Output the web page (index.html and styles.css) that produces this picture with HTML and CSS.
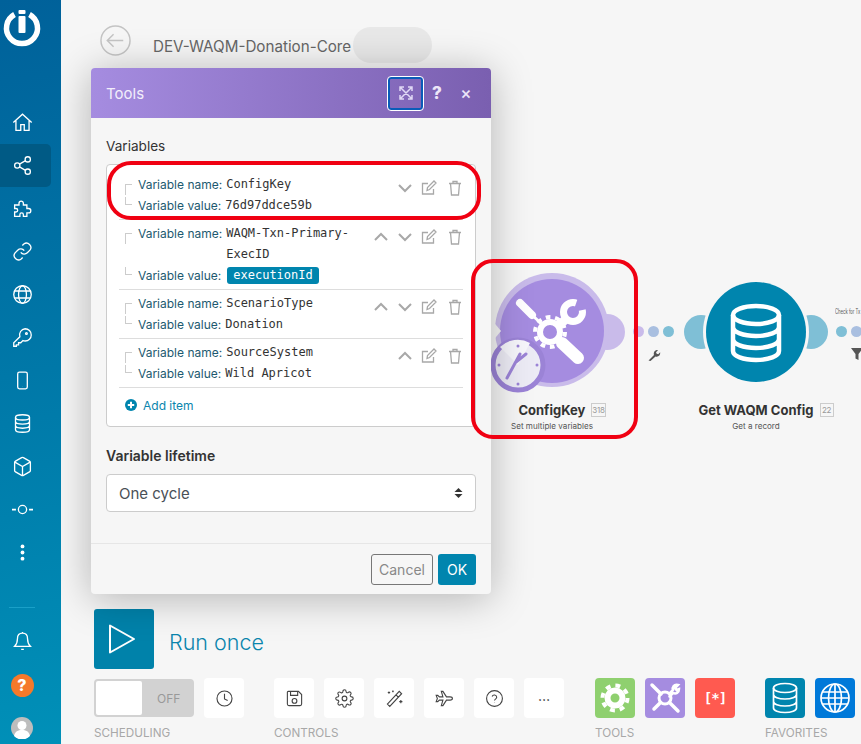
FILE: index.html
```html
<!DOCTYPE html>
<html lang="en">
<head>
  <meta charset="UTF-8" />
  <title>DEV-WAQM-Donation-Core</title>
  <link rel="stylesheet" href="styles.css">
</head>
<body>
<div class="app">

  <!-- Left nav -->
  <nav class="sidebar">
    <svg class="logo" width="40" height="40" viewBox="0 0 40 40">
      <path d="M12.5 6.5a15.5 15.5 0 1 0 15 0" fill="none" stroke="#fff" stroke-width="5.5"/>
      <rect x="16.5" y="2" width="7" height="4" rx="1" fill="#fff"/>
      <rect x="16.5" y="8" width="7" height="17" rx="1" fill="#fff"/>
    </svg>
    <ul class="nav-list">
      <li class="nav-item"><svg viewBox="0 0 24 24"><path d="M1.5 12 12 2.5 22.5 12M4.5 10v11H10v-6.500h4V21h5.5V10"/></svg></li>
      <li class="nav-item active"><svg viewBox="0 0 24 24"><circle cx="18" cy="5" r="3"/><circle cx="6" cy="12" r="3"/><circle cx="18" cy="19" r="3"/><path d="m8.6 13.500 6.800 4M15.400 6.500l-6.800 4"/></svg></li>
      <li class="nav-item"><svg viewBox="0 0 24 24"><path d="M3 8h5V6a2.500 2.500 0 0 1 5 0v2h4v4h2a2.500 2.500 0 0 1 0 5h-2v4h-4v-2a2 2 0 0 0-4 0v2H3v-5h1.500a2 2 0 0 0 0-4H3z"/></svg></li>
      <li class="nav-item"><svg viewBox="0 0 24 24"><path d="M10 13a5 5 0 0 0 7.500.5l3-3a5 5 0 0 0-7-7l-1.700 1.700"/><path d="M14 11a5 5 0 0 0-7.500-.5l-3 3a5 5 0 0 0 7 7l1.700-1.700"/></svg></li>
      <li class="nav-item"><svg viewBox="0 0 24 24"><circle cx="12" cy="12" r="10"/><ellipse cx="12" cy="12" rx="4.5" ry="10"/><path d="M3 8h18M3 16h18"/></svg></li>
      <li class="nav-item"><svg viewBox="0 0 24 24"><path d="M15 2a7 7 0 0 1 0 14c-1 0-1.800-.2-2.500-.5L10 18H7.500v2.500H5V22H2v-4l7-6.800A7 7 0 0 1 15 2z"/><circle cx="16.5" cy="7.5" r="1"/></svg></li>
      <li class="nav-item"><svg viewBox="0 0 24 24"><rect x="6.5" y="2.5" width="11" height="19" rx="2"/><path d="M12 18.500v.1"/></svg></li>
      <li class="nav-item"><svg viewBox="0 0 24 24"><ellipse cx="12" cy="5" rx="8" ry="3"/><path d="M4 5v14c0 1.700 3.600 3 8 3s8-1.300 8-3V5M4 9.700c0 1.700 3.600 3 8 3s8-1.300 8-3M4 14.400c0 1.700 3.600 3 8 3s8-1.300 8-3"/></svg></li>
      <li class="nav-item"><svg viewBox="0 0 24 24"><path d="M21 16.500v-9a2 2 0 0 0-1-1.700l-7-4a2 2 0 0 0-2 0l-7 4a2 2 0 0 0-1 1.700v9a2 2 0 0 0 1 1.700l7 4a2 2 0 0 0 2 0l7-4a2 2 0 0 0 1-1.700z"/><path d="M3.300 7 12 12l8.700-5M12 22V12"/></svg></li>
      <li class="nav-item"><svg viewBox="0 0 24 24"><circle cx="12" cy="12" r="4.700"/><path d="M0 12h4.500M19.500 12H24" stroke-width="2"/></svg></li>
      <li class="nav-item"><svg viewBox="0 0 24 24"><circle cx="12" cy="5" r="2.200" class="solid"/><circle cx="12" cy="12" r="2.200" class="solid"/><circle cx="12" cy="19" r="2.200" class="solid"/></svg></li>
    </ul>
    <div class="nav-bottom">
      <div class="nav-divider"></div>
      <div class="nav-item"><svg viewBox="0 0 24 24"><path d="M12 2.500c-4 0-5.800 3-5.800 6.500 0 4.500-1.200 6.500-3.200 8.500h18c-2-2-3.200-4-3.200-8.500 0-3.500-1.800-6.500-5.800-6.500zM12 1v1.500M10.500 21h3"/></svg></div>
      <div class="help-badge">?</div>
      <svg class="avatar" width="22" height="22" viewBox="0 0 22 22">
        <circle cx="11" cy="11" r="11" fill="#bdbdbd"/>
        <circle cx="11" cy="8.5" r="4.500" fill="#fff"/>
        <path d="M3 19c1-4.500 4-6 8-6s7 1.500 8 6a11 11 0 0 1-16 0z" fill="#fff"/>
      </svg>
    </div>
  </nav>

  <!-- Scenario canvas -->
  <div class="canvas">
    <div class="node node-config">
      <svg class="node-art" width="160" height="130" viewBox="0 0 160 130">
        <circle cx="125" cy="60" r="18" fill="#c9bbea"/>
        <circle cx="70" cy="58" r="57" fill="#c9bbea"/>
        <circle cx="70" cy="59" r="52" fill="#a58ce0"/>
        <path d="M38 31 50 43" stroke="#fff" stroke-width="8" stroke-linecap="round"/>
        <path d="M50 43 64 56" stroke="#fff" stroke-width="3"/>
        <circle cx="91" cy="40" r="9.500" fill="none" stroke="#fff" stroke-width="7"/>
        <path d="M91 40 97 23 110 36z" fill="#a58ce0"/>
        <path d="M84 47 72 58" stroke="#fff" stroke-width="9"/>
        <path d="M80 71 96 86" stroke="#fff" stroke-width="12" stroke-linecap="round"/>
        <circle cx="68" cy="60" r="10" fill="#a58ce0" stroke="#fff" stroke-width="6"/>
        <circle cx="68" cy="60" r="15" fill="none" stroke="#fff" stroke-width="4" stroke-dasharray="4.700 4.720"/>
        <path d="M9 47l10 12-10 12z" fill="#f6f6f6"/>
        <circle cx="36" cy="93" r="25" fill="#ecebf5" stroke="#9b83d6" stroke-width="5"/>
        <path d="M36 93 18 75a25 25 0 0 1 30-4z" fill="#f6f6fb"/>
        <path d="M25 106l13-24M34 90l10-8" fill="none" stroke="#9b83d6" stroke-width="3" stroke-linecap="round"/>
        <circle cx="36" cy="74" r="1.500" fill="#9b83d6"/><circle cx="36" cy="112" r="1.500" fill="#9b83d6"/>
        <circle cx="17" cy="93" r="1.500" fill="#9b83d6"/><circle cx="55" cy="93" r="1.500" fill="#9b83d6"/>
      </svg>
      <div class="node-title"><strong>ConfigKey</strong><span class="node-count">318</span></div>
      <div class="node-sub">Set multiple variables</div>
    </div>

    <div class="link link-a">
      <i class="dot dot-p"></i><i class="dot dot-b"></i><i class="dot dot-t"></i>
      <svg class="link-icon" width="14" height="14" viewBox="0 0 14 14"><path d="M1.5 12.500 7 7c-.6-2 0-4.500 3-5l1 .2L9 4.300l.7 1.500 1.500.5 2-2c.4 3-2 5-4.700 4.200l-5 4.500z" fill="#555"/></svg>
    </div>

    <div class="node node-waqm">
      <svg class="node-art" width="160" height="130" viewBox="0 0 160 130">
        <circle cx="25" cy="60" r="17" fill="#7fbfd6"/>
        <circle cx="135" cy="60" r="17" fill="#7fbfd6"/>
        <circle cx="80" cy="60" r="53" fill="#f6f6f6"/>
        <circle cx="80" cy="60" r="50" fill="#0085ae"/>
        <g fill="none" stroke="#fff" stroke-width="4.500">
          <ellipse cx="80" cy="43" rx="23" ry="9"/>
          <path d="M57 43v36c0 5 10 9 23 9s23-4 23-9V43M57 55c0 5 10 9 23 9s23-4 23-9M57 67c0 5 10 9 23 9s23-4 23-9"/>
        </g>
      </svg>
      <div class="node-title"><strong>Get WAQM Config</strong><span class="node-count">22</span></div>
      <div class="node-sub">Get a record</div>
    </div>

    <div class="link link-b">
      <span class="filter-name">Check for Tx</span>
      <i class="dot dot-t"></i><i class="dot dot-b"></i>
      <svg class="link-icon" width="14" height="12" viewBox="0 0 14 12"><path d="M1 0h12L8.500 6v6l-3-1.500V6z" fill="#555"/></svg>
    </div>
  </div>

  <!-- Page head + toolbar -->
  <main class="main">
    <header class="scenario-head">
      <svg class="back-icon" width="31" height="31" viewBox="0 0 32 32" fill="none" stroke="#c4c4c4" stroke-width="1.500"><circle cx="16" cy="16" r="15"/><path d="M24 16H8M14 9.500 7.500 16l6.500 6.500"/></svg>
      <h1 class="scenario-name">DEV-WAQM-Donation-Core</h1>
      <span class="scenario-pill"></span>
    </header>

    <div class="run-row">
      <button class="run-btn" type="button" aria-label="Run once">
        <svg width="28" height="32" viewBox="0 0 28 32"><path d="M2 2.500v27L26 16z" fill="none" stroke="#fff" stroke-width="2" stroke-linejoin="round"/></svg>
      </button>
      <span class="run-label">Run once</span>
    </div>

    <div class="toolbar">
      <section class="tool-group">
        <div class="tool-row">
          <div class="toggle"><span class="toggle-knob"></span><span class="toggle-text">OFF</span></div>
          <button class="tool-btn" type="button"><svg viewBox="0 0 24 24"><circle cx="12" cy="12" r="9.500"/><path d="M12 6v6.500l4 2"/></svg></button>
        </div>
        <div class="tool-caption">SCHEDULING</div>
      </section>

      <section class="tool-group">
        <div class="tool-row">
          <button class="tool-btn" type="button"><svg viewBox="0 0 24 24"><path d="M4 3h13l4 4v12a2 2 0 0 1-2 2H5a2 2 0 0 1-2-2V4a1 1 0 0 1 1-1z"/><path d="M7 3v5h9V3"/><circle cx="12" cy="15" r="3"/></svg></button>
          <button class="tool-btn" type="button"><svg viewBox="0 0 24 24"><circle cx="12" cy="12" r="3"/><path d="M19.400 15a1.650 1.650 0 0 0 .33 1.820l.06.06a2 2 0 0 1 0 2.830 2 2 0 0 1-2.830 0l-.06-.06a1.650 1.650 0 0 0-1.820-.33 1.650 1.650 0 0 0-1 1.510V21a2 2 0 0 1-2 2 2 2 0 0 1-2-2v-.09A1.650 1.650 0 0 0 9 19.400a1.650 1.650 0 0 0-1.820.33l-.06.06a2 2 0 0 1-2.830 0 2 2 0 0 1 0-2.830l.06-.06a1.650 1.650 0 0 0 .33-1.820 1.650 1.650 0 0 0-1.510-1H3a2 2 0 0 1-2-2 2 2 0 0 1 2-2h.09A1.650 1.650 0 0 0 4.600 9a1.650 1.650 0 0 0-.33-1.820l-.06-.06a2 2 0 0 1 0-2.830 2 2 0 0 1 2.830 0l.06.06a1.650 1.650 0 0 0 1.820.33H9a1.650 1.650 0 0 0 1-1.510V3a2 2 0 0 1 2-2 2 2 0 0 1 2 2v.09a1.650 1.650 0 0 0 1 1.510 1.650 1.650 0 0 0 1.820-.33l.06-.06a2 2 0 0 1 2.830 0 2 2 0 0 1 0 2.830l-.06.06a1.650 1.650 0 0 0-.33 1.820V9a1.650 1.650 0 0 0 1.510 1H21a2 2 0 0 1 2 2 2 2 0 0 1-2 2h-.09a1.650 1.650 0 0 0-1.510 1z"/></svg></button>
          <button class="tool-btn" type="button"><svg viewBox="0 0 24 24"><path d="M3 19 18 3l3 3L6 22zM14 7.500l3 3M5 3v3M3.500 4.500h3M10 2v2M9 3h2M20 14v4M18 16h4"/></svg></button>
          <button class="tool-btn" type="button"><svg viewBox="0 0 24 24"><path d="M22 12c0-1.200-1.500-2-3-2h-4.500L10 3H8l2 7H5.500L3.500 8h-2L3 12l-1.500 4h2l2-2H10l-2 7h2l4.500-7H19c1.500 0 3-.8 3-2z"/></svg></button>
          <button class="tool-btn" type="button"><svg viewBox="0 0 24 24"><circle cx="12" cy="12" r="10"/><path d="M9 9.500a3 3 0 0 1 5.800 1c0 2-2.800 2.500-2.800 4M12 17.500v.1"/></svg></button>
          <button class="tool-btn tool-more" type="button">&#8230;</button>
        </div>
        <div class="tool-caption">CONTROLS</div>
      </section>

      <section class="tool-group tools-group">
        <div class="tool-row">
          <button class="tool-btn app-green" type="button"><svg viewBox="0 0 40 40"><circle cx="20" cy="20" r="7.500" stroke-width="6"/><circle cx="20" cy="20" r="12.500" stroke-width="4" stroke-dasharray="4.900 4.920"/></svg></button>
          <button class="tool-btn app-purple" type="button"><svg viewBox="0 0 40 40"><circle cx="20" cy="20" r="6" stroke-width="3"/><path d="M7 7l9 9M24.500 24.500 33 33" stroke-width="3.500"/><path d="M24.500 15.500 28 12c-1-3 1-6 5-5l-3 3 1.500 2 2.500-1c0 4-3 5-6 4l-3.500 3.500" stroke-width="2.500"/><path d="M15.500 24.500 9 31" stroke-width="3.500"/></svg></button>
          <button class="tool-btn app-red" type="button">[*]</button>
        </div>
        <div class="tool-caption">TOOLS</div>
      </section>

      <section class="tool-group">
        <div class="tool-row">
          <button class="tool-btn app-teal" type="button"><svg viewBox="0 0 40 40"><ellipse cx="20" cy="10" rx="11.500" ry="4.500"/><path d="M8.500 10v20c0 2.500 5 4.500 11.500 4.500S31.500 32.500 31.500 30V10M8.500 16.500c0 2.500 5 4.500 11.500 4.500s11.500-2 11.500-4.500M8.500 23.500c0 2.500 5 4.500 11.500 4.500s11.500-2 11.500-4.500"/></svg></button>
          <button class="tool-btn app-blue" type="button"><svg viewBox="0 0 40 40"><circle cx="20" cy="20" r="14"/><ellipse cx="20" cy="20" rx="6.500" ry="14"/><path d="M20 6v28M7 14h26M6 20h28M7 26h26"/></svg></button>
        </div>
        <div class="tool-caption">FAVORITES</div>
      </section>
    </div>
  </main>

  <!-- Tools dialog -->
  <div class="dialog">
    <div class="dialog-head">
      <span class="dialog-title">Tools</span>
      <button class="head-btn head-expand" type="button">
        <svg width="14" height="14" viewBox="0 0 14 14" fill="none" stroke="#e0d8f5" stroke-width="1.500"><path d="M1 5V1h4M9 1h4v4M13 9v4H9M5 13H1V9M1.500 1.500l11 11M12.500 1.500l-11 11"/></svg>
      </button>
      <button class="head-btn head-help" type="button">?</button>
      <button class="head-btn head-close" type="button">&#215;</button>
    </div>

    <div class="dialog-body">
      <div class="field-label">Variables</div>
      <div class="var-box">

        <div class="var-row">
          <div class="var-fields">
            <div class="var-line"><i class="corner corner-top"></i><span class="var-key">Variable name:</span><span class="var-val">ConfigKey</span></div>
            <div class="var-line"><i class="corner corner-bottom"></i><span class="var-key">Variable value:</span><span class="var-val">76d97ddce59b</span></div>
          </div>
          <div class="var-actions">
            <svg viewBox="0 0 16 16"><path d="M2 5l6 6 6-6" stroke-width="2"/></svg>
            <svg viewBox="0 0 16 16"><path d="M12.500 9v5h-11V3.500H7M6 10.500l.5-3L13 1l2 2-6.500 6.500z"/></svg>
            <svg class="var-trash" viewBox="0 0 16 16"><path d="M2 3.500h12M6 3.500v-2h4v2M3.500 3.500 4.500 15h7l1-11.500"/></svg>
          </div>
        </div>

        <div class="var-row">
          <div class="var-fields">
            <div class="var-line"><i class="corner corner-top"></i><span class="var-key">Variable name:</span><span class="var-val">WAQM-Txn-Primary-ExecID</span></div>
            <div class="var-line"><i class="corner corner-bottom"></i><span class="var-key">Variable value:</span><span class="var-pill">executionId</span></div>
          </div>
          <div class="var-actions">
            <svg viewBox="0 0 16 16"><path d="M2 11l6-6 6 6" stroke-width="2"/></svg>
            <svg viewBox="0 0 16 16"><path d="M2 5l6 6 6-6" stroke-width="2"/></svg>
            <svg viewBox="0 0 16 16"><path d="M12.500 9v5h-11V3.500H7M6 10.500l.5-3L13 1l2 2-6.500 6.500z"/></svg>
            <svg class="var-trash" viewBox="0 0 16 16"><path d="M2 3.500h12M6 3.500v-2h4v2M3.500 3.500 4.500 15h7l1-11.500"/></svg>
          </div>
        </div>

        <div class="var-row">
          <div class="var-fields">
            <div class="var-line"><i class="corner corner-top"></i><span class="var-key">Variable name:</span><span class="var-val">ScenarioType</span></div>
            <div class="var-line"><i class="corner corner-bottom"></i><span class="var-key">Variable value:</span><span class="var-val">Donation</span></div>
          </div>
          <div class="var-actions">
            <svg viewBox="0 0 16 16"><path d="M2 11l6-6 6 6" stroke-width="2"/></svg>
            <svg viewBox="0 0 16 16"><path d="M2 5l6 6 6-6" stroke-width="2"/></svg>
            <svg viewBox="0 0 16 16"><path d="M12.500 9v5h-11V3.500H7M6 10.500l.5-3L13 1l2 2-6.500 6.500z"/></svg>
            <svg class="var-trash" viewBox="0 0 16 16"><path d="M2 3.500h12M6 3.500v-2h4v2M3.500 3.500 4.500 15h7l1-11.500"/></svg>
          </div>
        </div>

        <div class="var-row">
          <div class="var-fields">
            <div class="var-line"><i class="corner corner-top"></i><span class="var-key">Variable name:</span><span class="var-val">SourceSystem</span></div>
            <div class="var-line"><i class="corner corner-bottom"></i><span class="var-key">Variable value:</span><span class="var-val">Wild Apricot</span></div>
          </div>
          <div class="var-actions">
            <svg viewBox="0 0 16 16"><path d="M2 11l6-6 6 6" stroke-width="2"/></svg>
            <svg viewBox="0 0 16 16"><path d="M12.500 9v5h-11V3.500H7M6 10.500l.5-3L13 1l2 2-6.500 6.500z"/></svg>
            <svg class="var-trash" viewBox="0 0 16 16"><path d="M2 3.500h12M6 3.500v-2h4v2M3.500 3.500 4.500 15h7l1-11.500"/></svg>
          </div>
        </div>

        <div class="add-item">
          <svg width="12" height="12" viewBox="0 0 12 12"><circle cx="6" cy="6" r="6" fill="#0085ae"/><path d="M6 2.800v6.400M2.800 6h6.400" stroke="#fff" stroke-width="2"/></svg>
          <span>Add item</span>
        </div>
      </div>

      <div class="field-label field-strong">Variable lifetime</div>
      <div class="select-box">
        <span>One cycle</span>
        <svg width="9" height="12" viewBox="0 0 9 12"><path d="M4.500 1 8.500 5h-8zM4.500 11 .5 7h8z" fill="#333"/></svg>
      </div>
    </div>

    <div class="dialog-foot">
      <button class="btn-cancel" type="button">Cancel</button>
      <button class="btn-ok" type="button">OK</button>
    </div>
  </div>

  <!-- Red annotations drawn on the screenshot -->
  <div class="mark mark-row"></div>
  <div class="mark mark-node"></div>

</div>
</body>
</html>
```

FILE: styles.css
```css
* {
  box-sizing: border-box;
}
body {
  margin: 0;
  font-family: Inter, "Liberation Sans", sans-serif;
  color: #333;
  background: #f6f6f6;
  overflow: hidden;
}
button {
  font-family: inherit;
  border: none;
  padding: 0;
  cursor: pointer;
}
.app {
  position: relative;
  display: flex;
  width: 861px;
  height: 744px;
  overflow: hidden;
}

/* sidebar */
.sidebar {
  position: relative;
  z-index: 3;
  flex: 0 0 61px;
  display: flex;
  flex-direction: column;
  background: linear-gradient(170deg, #00619a 0%, #0078a8 50%, #0090b8 100%);
}
.logo {
  margin: 8px 0 0 2px;
}
.nav-list {
  list-style: none;
  margin: 53px 0 0;
  padding: 0;
}
.nav-item {
  display: flex;
  align-items: center;
  justify-content: center;
  width: 44px;
  height: 43px;
}
.nav-item svg {
  width: 21px;
  height: 21px;
  fill: none;
  stroke: #fff;
  stroke-width: 1.5;
}
.nav-item svg .solid {
  fill: #fff;
  stroke: none;
}
.nav-item.active {
  width: 51px;
  padding-right: 7px;
  background: #005a85;
  border-radius: 0 5px 5px 0;
}
.nav-bottom {
  margin-top: auto;
  display: flex;
  flex-direction: column;
  align-items: center;
  width: 44px;
  padding-bottom: 5px;
}
.nav-divider {
  width: 26px;
  height: 1px;
  background: #1aa0c8;
  margin-bottom: 12px;
}
.help-badge {
  width: 23px;
  height: 23px;
  margin: 11px 0 20px;
  border-radius: 50%;
  background: #f5792a;
  color: #fff;
  font-size: 16px;
  font-weight: 800;
  line-height: 23px;
  text-align: center;
}

/* page head and toolbar */
.main {
  flex: 1;
  display: flex;
  flex-direction: column;
  padding: 25px 0 0 33px;
  min-width: 0;
}
.scenario-head {
  display: flex;
  align-items: center;
  height: 40px;
  padding-left: 6px;
}
.back-icon {
  margin-top: -10px;
}
.scenario-name {
  margin: 2px 2px 0 22px;
  font-size: 15.2px;
  font-weight: 400;
  color: #666;
  white-space: nowrap;
}
.scenario-pill {
  width: 79px;
  height: 36px;
  border-radius: 18px;
  background: #e8e8e8;
}
.run-row {
  display: flex;
  align-items: center;
  margin-top: auto;
}
.run-btn {
  display: flex;
  align-items: center;
  justify-content: center;
  width: 60px;
  height: 60px;
  padding-right: 4px;
  border-radius: 3px;
  background: #0082aa;
}
.run-label {
  margin: 6px 0 0 15px;
  font-size: 21.5px;
  font-weight: 300;
  color: #0a85ad;
}
.toolbar {
  display: flex;
  gap: 30px;
  margin-top: 9px;
}
.tools-group {
  margin-left: 1px;
}
.tool-row {
  display: flex;
  gap: 10px;
}
.tool-caption {
  margin-top: 8px;
  height: 18px;
  font-size: 11.7px;
  line-height: 14px;
  color: #a8a8a8;
  white-space: nowrap;
}
.tool-btn {
  display: flex;
  align-items: center;
  justify-content: center;
  width: 40px;
  height: 40px;
  border-radius: 4px;
  background: #fff;
}
.tool-btn svg {
  width: 19px;
  height: 19px;
  fill: none;
  stroke: #444;
  stroke-width: 1.4;
}
.tool-more {
  font-size: 14px;
  padding-bottom: 6px;
  color: #333;
}
.toggle {
  display: flex;
  align-items: center;
  width: 100px;
  height: 38px;
  margin-top: 1px;
  padding: 2px;
  border-radius: 4px;
  background: #d2d2d2;
}
.toggle-knob {
  width: 46px;
  height: 34px;
  border-radius: 2px;
  background: #fff;
}
.toggle-text {
  margin-left: 15px;
  font-size: 12px;
  color: #999;
}
.app-green { background: #8fd06f; }
.app-purple { background: #a58ce0; }
.app-red {
  background: #ff5a50;
  color: #fff;
  font-family: "DejaVu Sans Mono", monospace;
  font-size: 14px;
  font-weight: 700;
  letter-spacing: -1px;
}
.app-teal { background: #0085ae; }
.app-blue { background: #0079d9; }
.tool-btn.app-green svg,
.tool-btn.app-purple svg,
.tool-btn.app-teal svg,
.tool-btn.app-blue svg {
  width: 40px;
  height: 40px;
  stroke: #fff;
  stroke-width: 1.7;
}
.tool-btn.app-purple svg {
  stroke-linecap: round;
}

.canvas {
  position: absolute;
  inset: 0;
}
.node {
  position: absolute;
  top: 272px;
  width: 160px;
}
.node-config {
  left: 482px;
}
.node-waqm {
  left: 676px;
}
.node-art {
  display: block;
}
.node-title {
  display: flex;
  align-items: center;
  justify-content: center;
  gap: 6px;
  height: 18px;
  font-size: 13px;
  white-space: nowrap;
  margin-top: -1px;
}
.node-config .node-title {
  margin-left: 10px;
  width: 140px;
}
.node-waqm .node-title {
  padding-left: 20px;
}
.node-count {
  min-width: 14px;
  height: 14px;
  border: 1px solid #ccc;
  font-size: 8px;
  letter-spacing: -0.3px;
  line-height: 12px;
  text-align: center;
  color: #999;
}
.node-sub {
  margin-top: 2px;
  font-size: 8.1px;
  text-align: center;
  color: #555;
}
.node-config .node-sub {
  margin-left: -10px;
  width: 160px;
}
.link {
  position: absolute;
  top: 326px;
  display: flex;
  gap: 4px;
}
.link-a {
  left: 633px;
}
.link-b {
  left: 836px;
}
.dot {
  width: 11px;
  height: 11px;
  border-radius: 50%;
}
.dot-p { background: #c9bbea; }
.dot-b { background: #a9bfe0; }
.dot-t { background: #7fbfd6; }
.link-icon {
  position: absolute;
  top: 22px;
  left: 14px;
}
.filter-name {
  position: absolute;
  top: -19px;
  left: -1px;
  font-size: 7px;
  color: #555;
  white-space: nowrap;
  transform: scaleX(0.6);
  transform-origin: left;
}

/* dialog */
.dialog {
  position: absolute;
  z-index: 2;
  left: 91px;
  top: 68px;
  width: 400px;
  height: 526px;
  display: flex;
  flex-direction: column;
  border-radius: 4px;
  background: #f6f6f6;
  box-shadow: 0 4px 40px rgba(0, 0, 0, 0.28);
}
.dialog-head {
  display: flex;
  align-items: center;
  height: 50px;
  padding: 0 15px;
  border-radius: 4px 4px 0 0;
  background: linear-gradient(90deg, #a58ce0, #7a5fb0);
  color: #fff;
}
.dialog-title {
  flex: 1;
  font-size: 15px;
  color: #f2eefb;
}
.head-btn {
  background: transparent;
  color: #ece6f8;
}
.head-expand {
  display: flex;
  align-items: center;
  justify-content: center;
  width: 35px;
  height: 33px;
  border: 2px solid #0a5cb8;
  outline: 1px solid #fff;
  border-radius: 3px;
}
.head-help {
  width: 28px;
  font-size: 17px;
  font-weight: 800;
}
.head-close {
  width: 30px;
  margin-right: -5px;
  font-size: 17px;
  font-weight: 500;
}
.dialog-body {
  flex: 1;
  padding: 20px 15px 0;
}
.field-label {
  height: 19px;
  font-size: 13.6px;
  line-height: 16px;
  margin-bottom: 7px;
}
.field-strong {
  margin-top: 21px;
  margin-bottom: 7px;
  font-size: 14px;
  font-weight: 600;
}
.var-box {
  height: 263px;
  padding: 6px 12px 0;
  border: 1px solid #ccc;
  border-radius: 4px;
  background: #fff;
}
.var-row {
  display: flex;
  padding: 3px 0;
  border-bottom: 1px solid #ddd;
}
.var-fields {
  flex: 1;
  min-width: 0;
  padding-left: 6px;
}
.var-line {
  display: flex;
  line-height: 21px;
  font-size: 12px;
}
.corner {
  flex: 0 0 7px;
  margin-right: 6px;
  border-left: 1px solid #ccc;
}
.corner-top {
  height: 11px;
  margin-top: 10px;
  border-top: 1px solid #ccc;
}
.corner-bottom {
  height: 8px;
  margin-top: 2px;
  border-bottom: 1px solid #ccc;
}
.var-key {
  flex: none;
  color: #1d5a70;
  margin-right: 4px;
}
.var-val {
  font-family: "DejaVu Sans Mono", monospace;
  color: #333;
}
.var-pill {
  align-self: center;
  margin-left: 2px;
  padding: 0 6px;
  height: 17px;
  line-height: 17px;
  border-radius: 3px;
  background: #0085ae;
  color: #fff;
  font-family: "DejaVu Sans Mono", monospace;
}
.var-actions {
  display: flex;
  flex: none;
  gap: 8px;
  height: 28px;
  align-items: center;
}
.var-actions svg {
  width: 16px;
  height: 16px;
  fill: none;
  stroke: #a8a8a8;
  stroke-width: 1.3;
}
.var-actions .var-trash {
  margin-left: 2px;
}
.add-item {
  display: flex;
  align-items: center;
  gap: 6px;
  height: 34px;
  padding-left: 6px;
  font-size: 12px;
  color: #0a85ad;
}
.select-box {
  display: flex;
  align-items: center;
  justify-content: space-between;
  height: 38px;
  padding: 0 12px;
  border: 1px solid #ccc;
  border-radius: 4px;
  background: #fff;
  font-size: 15px;
  color: #495057;
}
.dialog-foot {
  display: flex;
  justify-content: flex-end;
  gap: 5px;
  height: 51px;
  padding: 10px 15px 0;
  border-top: 1px solid #e6e6e6;
}
.btn-cancel,
.btn-ok {
  height: 31px;
  border-radius: 3px;
  font-size: 14px;
}
.btn-cancel {
  width: 62px;
  border: 1px solid #777;
  background: #f6f6f6;
  color: #888;
}
.btn-ok {
  width: 38px;
  background: #0085ae;
  color: #fff;
}

/* annotations */
.mark {
  position: absolute;
  z-index: 4;
  border: 4px solid #f00012;
  pointer-events: none;
}
.mark-row {
  left: 107px;
  top: 161px;
  width: 374px;
  height: 59px;
  border-radius: 24px;
}
.mark-node {
  left: 471px;
  top: 259px;
  width: 167px;
  height: 180px;
  border-radius: 22px;
}
```
